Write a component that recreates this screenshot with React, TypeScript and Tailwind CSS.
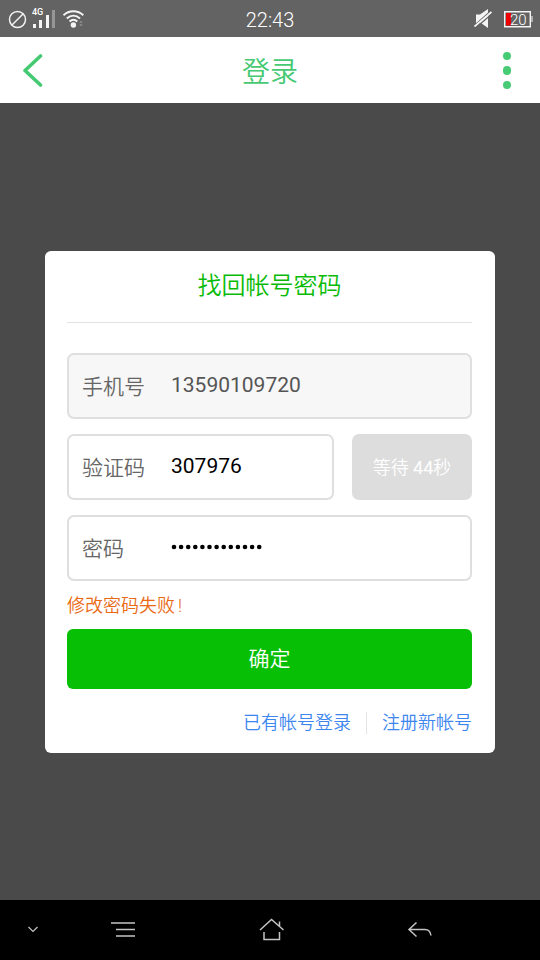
import React, { useState } from 'react';
import { clsx } from 'clsx';

interface FieldProps {
  label: string;
  value: string;
  type?: string;
  disabled?: boolean;
  className?: string;
  onChange?: (value: string) => void;
}

const Field: React.FC<FieldProps> = ({ label, value, type = 'text', disabled, className, onChange }) => (
  <label
    className={clsx(
      'flex h-[66px] items-center rounded-[7px] border-2 border-[#dfdfdf] pl-[13px]',
      disabled ? 'bg-[#f7f7f7]' : 'bg-white',
      className
    )}
  >
    <span className="w-[89px] shrink-0 pt-[4px] text-[21px] font-[350] text-[#666666]">{label}</span>
    {type === 'password' ? (
      <svg className="mb-[3px]" width="120" height="6" viewBox="0 0 120 6">
        {value.split('').map((_, i) => (
          <circle key={i} cx={3 + i * 7.1} cy={3} r={2.3} />
        ))}
      </svg>
    ) : (
      <input
        type={type}
        value={value}
        disabled={disabled}
        onChange={e => onChange?.(e.target.value)}
        className={clsx(
          'w-full min-w-0 bg-transparent pb-px text-[21px] outline-none',
          disabled ? 'text-[#555555]' : 'text-black'
        )}
      />
    )}
  </label>
);

const StatusBar = () => (
  <div className="grid h-[37px] grid-cols-3 items-center bg-[#636363] text-white">
    <div className="flex items-center pl-2">
      <svg width="19" height="20" viewBox="0 0 19 20" fill="none" stroke="#f4f4f4" strokeWidth="1.5">
        <circle cx="9.5" cy="10.5" r="8" />
        <path d="M4 16 15 5" />
      </svg>
      <div className="relative ml-[5px] h-[20px] w-[24px]">
        <span className="absolute left-0 -top-px text-[9px] leading-[9px] font-medium">4G</span>
        <svg width="24" height="20" viewBox="0 0 24 20" fill="#f4f4f4">
          <path d="M1 15h3v4H1zM7 11h3v8H7zM14 6h3v13h-3z" />
          <path d="M20 1h3v18h-3z" fill="#969696" />
        </svg>
      </div>
      <svg className="ml-[6px]" width="24" height="20" viewBox="0 0 24 20" fill="none" stroke="#f4f4f4" strokeWidth="1.9">
        <path d="M1.5 6.3C7 .9 15.8 .9 21.3 6.3M4.8 9.5C8.7 5.7 14.1 5.7 18 9.5M7.5 12.5C10 10.2 12.9 10.2 15.3 12.5" />
        <circle cx="11.4" cy="16" r="2.7" fill="#f4f4f4" stroke="none" />
        <path d="m17.3 13.5 1.7-1.5 1.7 1.5zM17.3 15.5l1.7 1.5 1.7-1.5z" fill="#a5a5a5" stroke="none" />
      </svg>
    </div>
    <div className="pt-[3px] text-center text-[20px] font-[350]">22:43</div>
    <div className="flex items-center justify-end pr-[7px]">
      <svg width="19" height="20" viewBox="0 0 19 20">
        <path d="M2 5.500h4l8-5.500v19l-7-5H2z" fill="#f4f4f4" />
        <path d="M-1 18 16 2.800" stroke="#636363" strokeWidth="1.6" />
        <path d="M.5 17.500 17.500 3" stroke="#f4f4f4" strokeWidth="1.8" />
        <path d="M1.500 19 18.500 4.500" stroke="#636363" strokeWidth="1.2" />
      </svg>
      <div className="relative ml-[10px] h-[18px] w-[30px]">
        <svg width="30" height="18" viewBox="0 0 30 18">
          <path d="M1.700 1.700h25.600v15H1.700z" fill="none" stroke="#f4f4f4" strokeWidth="1.4" />
          <path d="M3 3h5v12.500H3z" fill="#ee0000" />
          <path d="M29 6v6" stroke="#f4f4f4" />
        </svg>
        <span className="absolute top-[2px] left-[7px] text-[15px] leading-[16px] font-light">20</span>
      </div>
    </div>
  </div>
);

const Header = () => (
  <header className="grid h-[66px] grid-cols-3 items-center bg-white text-[#45c973]">
    <button className="pl-[22px]">
      <svg width="22" height="34" viewBox="0 0 22 34" fill="none" stroke="currentColor" strokeWidth="3.6" strokeLinecap="round" strokeLinejoin="round">
        <path d="M18.5 3 3 17.5 18.5 32" />
      </svg>
    </button>
    <h1 className="pt-[5px] text-center text-[28px] font-[350]">登录</h1>
    <button className="flex flex-col items-end gap-[6px] pt-px pr-[29px]">
      <span className="size-[8.5px] rounded-full bg-[#48cb75]" />
      <span className="size-[8.5px] rounded-full bg-[#48cb75]" />
      <span className="size-[8.5px] rounded-full bg-[#48cb75]" />
    </button>
  </header>
);

const NavBar = () => (
  <nav className="flex h-[60px] items-center bg-black text-[#c4c4c4]">
    <svg className="ml-[27px]" width="12" height="12" viewBox="0 0 12 12" fill="none" stroke="currentColor" strokeWidth="1.2">
      <path d="m1.5 3 4.5 4.5 4.5-4.5" />
    </svg>
    <svg className="ml-[71px]" width="26" height="20" viewBox="0 0 26 20" fill="none" stroke="currentColor" strokeWidth="1.6">
      <path d="M1 3h24M6 9.500h19M6 16h19" />
    </svg>
    <svg className="ml-[123px]" width="26" height="24" viewBox="0 0 26 24" fill="none" stroke="currentColor" strokeWidth="1.5">
      <path d="M1 12 12.5 1.5 24.5 12M20.5 8V3.5M5 14v7.5h15.5V14" />
    </svg>
    <svg className="ml-[122px]" width="26" height="20" viewBox="0 0 26 20" fill="none" stroke="currentColor" strokeWidth="1.5">
      <path d="M9.5 2.5 2 9.5l7.5 7M2 9.5h16c3.500 0 5.500 2.500 6 6" />
    </svg>
  </nav>
);

export default function App() {
  const [code, setCode] = useState('307976');
  const [password] = useState('x'.repeat(13));

  return (
    <div className="flex h-[960px] w-[540px] flex-col overflow-hidden bg-[#4a4a4a] font-[Roboto,'Noto_Sans_CJK_SC',sans-serif]">
      <StatusBar />
      <Header />

      <main className="flex-1 px-[45px] pt-[148px]">
        <div className="h-[502px] rounded-[6px] bg-white pr-[23px] pl-[22px]">
          <h2 className="flex h-[72px] items-center justify-center border-b border-[#e2e2e2] pb-[2px] text-[24px] font-[350] text-[#09bb07]">
            找回帐号密码
          </h2>

          {/* Form */}
          <div className="mt-[30px] flex flex-col gap-[15px]">
            <Field label="手机号" value="13590109720" disabled />
            <div className="flex gap-[18px]">
              <Field label="验证码" value={code} onChange={setCode} className="flex-1" />
              <button className="h-[66px] w-[120px] rounded-[7px] bg-[#dddddd] text-[18px] font-[350] text-white">
                等待 <span className="font-normal">44</span>秒
              </button>
            </div>
            <Field label="密码" value={password} type="password" />
          </div>

          <p className="flex h-[48px] items-center text-[18px] font-[350] text-[#ea6a14]">
            修改密码失败<span className="ml-[3px]">!</span>
          </p>
          <button className="h-[60px] w-full rounded-[6px] bg-[#07bf05] pt-px text-[21px] font-[350] text-white">确定</button>

          {/* Links */}
          <div className="mt-[22px] flex items-center justify-end text-[18px] leading-[24px] font-[350] text-[#3d86f0]">
            <a>已有帐号登录</a>
            <span className="mx-[15px] h-[22px] w-px bg-[#e5e5e5]" />
            <a>注册新帐号</a>
          </div>
        </div>
      </main>

      <NavBar />
    </div>
  );
}
